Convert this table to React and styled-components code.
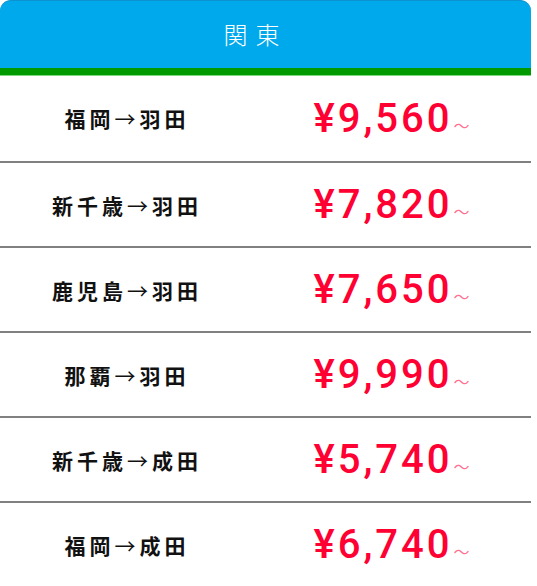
import React from "react";
import styled, { createGlobalStyle } from "styled-components";

const GlobalStyle = createGlobalStyle`
  body {
    margin: 0;
    background: #ffffff;
    font-family: "Noto Sans CJK JP", "Noto Sans", sans-serif;
  }
`;

const routes = [
  { from: "福岡", to: "羽田", price: "9,560" },
  { from: "新千歳", to: "羽田", price: "7,820" },
  { from: "鹿児島", to: "羽田", price: "7,650" },
  { from: "那覇", to: "羽田", price: "9,990" },
  { from: "新千歳", to: "成田", price: "5,740" },
  { from: "福岡", to: "成田", price: "6,740" },
];

const App = () => {
  return (
    <>
      <GlobalStyle />
      <Card>
        <Header>関東</Header>
        <List>
          {routes.map((r) => (
            <Row key={r.from + r.to}>
              <Route>
                {r.from}
                <Arrow>→</Arrow>
                {r.to}
              </Route>
              <Price>
                ¥{r.price}
                <Tilde>～</Tilde>
              </Price>
            </Row>
          ))}
        </List>
      </Card>
    </>
  );
};

export default App;

const Card = styled.div`
  width: 531px;
`;

const Header = styled.div`
  height: 75px;
  display: flex;
  align-items: center;
  justify-content: center;
  box-sizing: border-box;
  padding: 0 20px 2px 0;
  background-color: #00a9eb;
  border-top: 1px solid #0a93cf;
  border-bottom: 7px solid #009900;
  border-radius: 11px 11px 0 0;
  box-shadow: 0 1px 0 #7fd87f;
  color: #ffffff;
  font-size: 24px;
  font-weight: 300;
  letter-spacing: 8px;
`;

const List = styled.div`
  display: flex;
  flex-direction: column;
`;

const Row = styled.div`
  display: grid;
  grid-template-columns: 250px 1fr;
  align-items: center;
  height: 85px;
  border-bottom: 2px solid #808080;
  box-sizing: border-box;

  &:first-child {
    height: 88px;
  }
`;

const Route = styled.div`
  text-align: center;
  font-size: 21px;
  font-weight: 700;
  letter-spacing: 4px;
  color: #111111;
  padding: 0 0 0 4px;
`;

const Arrow = styled.span`
  font-weight: 400;
`;

const Price = styled.div`
  text-align: center;
  font-family: "Roboto", "Noto Sans", sans-serif;
  font-size: 40px;
  font-weight: 500;
  letter-spacing: 3px;
  color: #ff0033;
  padding-left: 2px;
`;

const Tilde = styled.span`
  font-family: "Noto Sans CJK JP", sans-serif;
  font-size: 16px;
  font-weight: 400;
  letter-spacing: 0;
  color: #ff7090;
  margin-left: 1px;
`;
